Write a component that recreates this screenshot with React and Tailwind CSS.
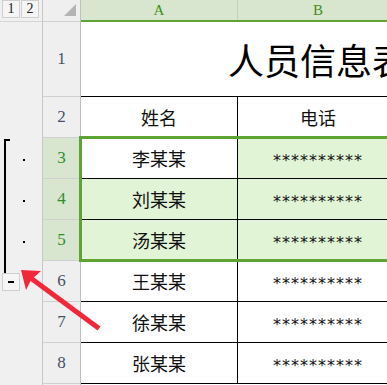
import React from 'react';

const rows = [
  { n: 2, a: '姓名', b: '电话' },
  { n: 3, a: '李某某', b: '**********', sel: true, active: true },
  { n: 4, a: '刘某某', b: '**********', sel: true },
  { n: 5, a: '汤某某', b: '**********', sel: true },
  { n: 6, a: '王某某', b: '**********' },
  { n: 7, a: '徐某某', b: '**********' },
  { n: 8, a: '张某某', b: '**********' },
];

const cjk = "font-['Noto_Sans_CJK_SC',sans-serif]";

const Outline = () => (
  <div className="w-[43px] shrink-0 flex flex-col bg-[#f0f0f0] border-r border-[#c8c8c8]">
    {/* level buttons */}
    <div className="h-[22px] flex gap-[1px] pl-[2px] border-b border-[#d6d6d6]">
      {['1', '2'].map((l) => (
        <div
          key={l}
          className="w-[18px] h-[18px] flex items-center justify-center bg-[#f5f5f5] border border-[#cfcfcf] text-[14px] leading-none text-[#222] font-['Liberation_Serif',serif]"
        >
          {l}
        </div>
      ))}
    </div>
    <div className="h-[116px]" />
    {/* group bracket */}
    <div className="flex">
      <div className="ml-[4px] mt-[1px] h-[134px] w-[6px] border-l-2 border-t-2 border-black" />
      <div className="ml-[13px] flex flex-col">
        {[0, 1, 2].map((i) => (
          <div key={i} className="h-[41px] flex items-center pt-[3px]">
            <span className="w-[2px] h-[2px] bg-black" />
          </div>
        ))}
      </div>
    </div>
    <div className="ml-[2px] w-[18px] h-[18px] flex items-center justify-center bg-[#f5f5f5] border border-[#cfcfcf]">
      <span className="w-[6px] h-[2px] bg-black" />
    </div>
  </div>
);

const RowHeaders = () => (
  <div className="w-[38px] shrink-0 flex flex-col bg-[#efefef] border-r border-[#bfbfbf] font-['Liberation_Serif',serif] text-[17px]">
    <div className="h-[22px] shrink-0 flex justify-end items-end pr-[4px] pb-[5px] border-b border-[#d0d0d0]">
      <div className="w-0 h-0 border-l-[12px] border-l-transparent border-b-[12px] border-b-[#b4b4b4]" />
    </div>
    <div className="h-[75px] shrink-0 flex items-center justify-center border-b border-[#d0d0d0] text-[#46506a]">1</div>
    {rows.map((r) => (
      <div
        key={r.n}
        className={`h-[41px] shrink-0 flex items-center justify-center border-b border-[#d0d0d0] ${
          r.sel ? 'bg-[#d8e5cf] text-[#2f8f2a]' : 'text-[#46506a]'
        }`}
      >
        {r.n}
      </div>
    ))}
    <div className="h-[41px] shrink-0" />
  </div>
);

const Sheet = () => (
  <div className="flex-1 flex flex-col overflow-hidden">
    <div className="h-[22px] shrink-0 flex bg-[#d8e5cf] border-b-2 border-[#5ea432] font-['Liberation_Serif',serif] text-[15px] text-[#3f8f1a]">
      <div className="w-[157px] shrink-0 flex items-center justify-center border-r border-[#c4d0bc]">A</div>
      <div className="w-[160px] shrink-0 flex items-center justify-center">B</div>
    </div>
    <div className="h-[75px] shrink-0 flex items-center pl-[147px] border-b border-black overflow-hidden">
      <span className={`${cjk} text-[36px] leading-none whitespace-nowrap text-black`}>人员信息表</span>
    </div>
    {rows.map((r) => (
      <div key={r.n} className="h-[41px] shrink-0 flex border-b border-black">
        <div
          className={`w-[157px] shrink-0 flex items-center justify-center border-r border-black ${cjk} text-[18px] text-[#111] ${
            r.sel && !r.active ? 'bg-[#e2f4d6]' : 'bg-white'
          }`}
        >
          {r.a}
        </div>
        <div
          className={`w-[160px] shrink-0 flex items-center justify-center text-[#111] ${
            r.n === 2
              ? `${cjk} text-[18px]`
              : "font-['DejaVu_Sans',sans-serif] text-[16px] tracking-[1px] pt-[6px]"
          } ${r.sel ? 'bg-[#e2f4d6]' : 'bg-white'}`}
        >
          {r.b}
        </div>
      </div>
    ))}
  </div>
);

export default function App() {
  return (
    <div className="relative w-[387px] h-[385px] overflow-hidden bg-white flex">
      <Outline />
      <RowHeaders />
      <Sheet />

      {/* selection border A3:B5 */}
      <div className="absolute left-[79px] top-[136px] w-[400px] h-[126px] border-[3px] border-[#5ea432] pointer-events-none" />

      {/* red arrow */}
      <svg className="absolute left-0 top-0 pointer-events-none" width="387" height="385" viewBox="0 0 387 385">
        <line x1="97" y1="327" x2="32" y2="279" stroke="#f0283a" strokeWidth="5" strokeLinecap="square" />
        <polygon points="21,270 41,271 31,280 26,290" fill="#f0283a" />
      </svg>
    </div>
  );
}
